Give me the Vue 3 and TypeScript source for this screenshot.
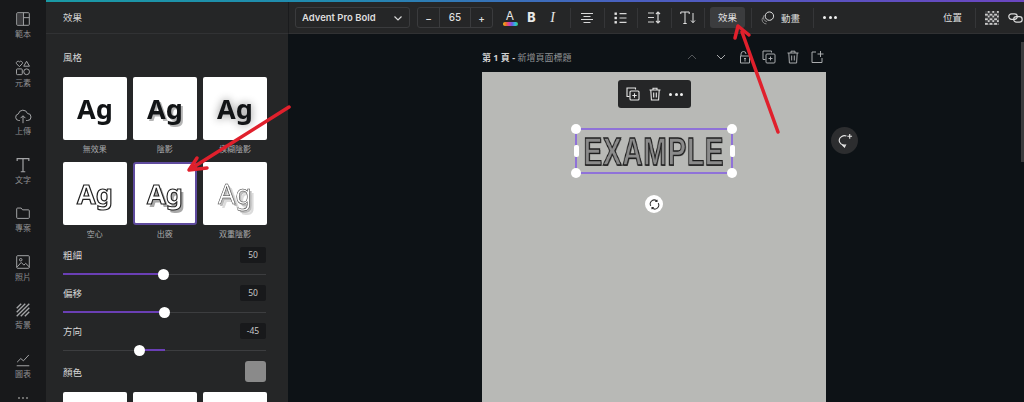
<template>
  <div class="app">
    <nav class="rail">
      <div v-for="item in railItems" :key="item.label" class="rail-item">
        <svg class="rail-icon" viewBox="0 0 20 20" fill="none" stroke="currentColor" stroke-width="1.1" v-html="item.icon"></svg>
        <span>{{ item.label }}</span>
      </div>
      <div class="rail-more"><i></i><i></i><i></i></div>
    </nav>

    <div class="main">
      <div class="strip"></div>
      <div class="body">
        <aside class="panel">
          <div class="panel-head">效果</div>
          <div class="panel-body">
            <div class="section-title">風格</div>
            <div class="tiles">
              <div v-for="tile in styleTiles" :key="tile.label" class="tile-cell">
                <div class="tile" :class="{ selected: tile.selected }">
                  <span class="ag" :class="tile.kind">Ag</span>
                </div>
                <div class="tile-label">{{ tile.label }}</div>
              </div>
            </div>

            <div v-for="s in sliders" :key="s.label" class="slider-block">
              <div class="slider-head">
                <span>{{ s.label }}</span>
                <span class="value">{{ s.value }}</span>
              </div>
              <div class="slider">
                <div class="fill" :style="{ left: s.from + 'px', width: s.to - s.from + 'px' }"></div>
                <div class="knob" :style="{ left: s.knob + 'px' }"></div>
              </div>
            </div>

            <div class="color-row">
              <span>顏色</span>
              <span class="swatch"></span>
            </div>
            <div class="tiles">
              <div v-for="n in 3" :key="n" class="tile"></div>
            </div>
          </div>
        </aside>

        <div class="work">
          <header class="topbar">
            <div class="font-select">
              <span>Advent Pro Bold</span>
              <svg width="10" height="10" viewBox="0 0 10 10" fill="none" stroke="#d8d8d8" stroke-width="1.2"><path d="M1.5 3.5 5 7l3.5-3.5" /></svg>
            </div>
            <div class="stepper">
              <span class="step">−</span>
              <span class="size">65</span>
              <span class="step">+</span>
            </div>
            <div class="tool-sm color-a">
              <span>A</span>
              <i></i>
            </div>
            <div class="tool-sm bold">B</div>
            <div class="tool-sm italic">I</div>
            <div class="tool sep">
              <svg width="14" height="12" viewBox="0 0 14 12" stroke="#d8d8d8" stroke-width="1.2"><path d="M1 1.5h12M3.5 4.5h7M1 7.5h12M3.5 10.5h7" /></svg>
            </div>
            <div class="tool sep">
              <svg width="13" height="12" viewBox="0 0 13 12" stroke="#d8d8d8" stroke-width="1.2" fill="#e4e4e4"><rect x="0.5" y="0.5" width="2.4" height="2.4" stroke="none" /><rect x="0.5" y="4.8" width="2.4" height="2.4" stroke="none" /><rect x="0.5" y="9.1" width="2.4" height="2.4" stroke="none" /><path d="M5.5 1.7h7M5.5 6h7M5.5 10.3h7" /></svg>
            </div>
            <div class="tool sep">
              <svg width="15" height="13" viewBox="0 0 15 13" fill="none" stroke="#d8d8d8" stroke-width="1.2"><path d="M1 2h6M1 6.500h6M1 11h6M11 1v11M9 3l2-2 2 2M9 10l2 2 2-2" /></svg>
            </div>
            <div class="tool sep">
              <svg width="16" height="13" viewBox="0 0 16 13" fill="none" stroke="#e4e4e4" stroke-width="1"><path d="M.8 3V1h8.400v2M5 1v11.500M3.300 12.500h3.400" /><path d="M13 2v9.500M11 9.500l2 2.200 2-2.200" /></svg>
            </div>
            <div class="tool-end sep">
              <span class="effect-btn">效果</span>
            </div>
            <div class="anim sep">
              <svg width="14" height="14" viewBox="0 0 15 15" fill="none" stroke="#c9c9c9"><circle cx="9" cy="5.500" r="4.500" stroke="#ededed" /><path d="M3.400 4.400a4.500 4.500 0 0 0 3 7M1.800 7a4.500 4.500 0 0 0 4 6.800" stroke="#8c8c8c" /></svg>
              <span>動畫</span>
            </div>
            <div class="tool sep dots-tool">
              <span class="dots"><i></i><i></i><i></i></span>
            </div>
            <div class="position">位置</div>
            <div class="checker"></div>
            <svg class="link" width="15" height="12" viewBox="0 0 15 12" fill="none" stroke="#dcdcdc" stroke-width="1.2"><rect x="0.800" y="1.800" width="8.500" height="5.500" rx="2.700" /><rect x="5.700" y="4.700" width="8.500" height="5.500" rx="2.700" /></svg>
          </header>

          <section class="canvas">
            <div class="page-col">
              <div class="page-head">
                <div class="page-title"><b>第 1 頁 -</b> <span>新增頁面標題</span></div>
                <div class="page-actions">
                  <svg v-for="a in pageActions" :key="a.name + a.icon.length" width="14" height="14" viewBox="0 0 14 14" fill="none" stroke="currentColor" stroke-width="1" :class="a.name" v-html="a.icon"></svg>
                </div>
              </div>
              <div class="page">
                <div class="float-bar">
                  <svg width="14" height="14" viewBox="0 0 14 14" fill="none" stroke="#e8e8e8" stroke-width="1.100"><path d="M9.500 2.500V1H1v8.500h2.500" /><rect x="4" y="4" width="9" height="9" rx="1" /><path d="M8.500 6.300v4.400M6.300 8.500h4.400" /></svg>
                  <svg width="14" height="14" viewBox="0 0 14 14" fill="none" stroke="#e8e8e8" stroke-width="1.100"><path d="M1.500 3h11M5 3V1.200h4V3M2.800 3l.6 10h7.200l.6-10M5.700 5.500v5M8.300 5.500v5" /></svg>
                  <span class="dots"><i></i><i></i><i></i></span>
                </div>
                <div class="selection">
                  <span class="example">EXAMPLE</span>
                  <i class="h tl"></i><i class="h tr"></i><i class="h bl"></i><i class="h br"></i>
                  <i class="bar lf"></i><i class="bar rt"></i>
                </div>
                <div class="rotate">
                  <svg width="11" height="11" viewBox="0 0 12 12" fill="none" stroke="#333" stroke-width="1.100"><path d="M2 7.500A4.200 4.200 0 0 1 8.500 2.300M10 4.500A4.200 4.200 0 0 1 3.500 9.700M8.800.8v2H6.800M3.200 11.200v-2h2" /></svg>
                </div>
              </div>
            </div>
            <div class="comment">
              <svg width="16" height="16" viewBox="0 0 17 17" fill="none" stroke="#e8e8e8" stroke-width="1.200"><path d="M10 3.200A5.700 5 0 1 0 9 12.800L8 15l-2.500-2.500" /><path d="M13.500 1v5M11 3.500h5" /></svg>
            </div>
            <div class="scroll-thumb"></div>
          </section>
        </div>
      </div>
    </div>

    <svg class="arrows" width="1024" height="402" viewBox="0 0 1024 402" fill="none" stroke="#e0202c" stroke-width="3.500" stroke-linecap="round" stroke-linejoin="round">
      <path d="M289 107 192 168" />
      <path d="M197 158 189 170 207 168" />
      <path d="M778 132 742 32" />
      <path d="M735 38 738 26 749 35" />
    </svg>
  </div>
</template>

<script setup lang="ts">
interface RailItem {
  label: string;
  icon: string;
}

const railItems: RailItem[] = [
  { label: "範本", icon: '<rect x="3" y="3" width="14" height="14" rx="1"/><path d="M10.500 3v14M10.500 8.500H17" /><rect x="3.800" y="3.800" width="6" height="12.400" fill="currentColor" opacity=".25" stroke="none"/>' },
  { label: "元素", icon: '<path d="M6 8.500 2.800 5.200a1.900 1.900 0 0 1 3.200-2 1.900 1.900 0 0 1 3.200 2zM14 2.500l3.200 5.500h-6.400z" /><rect x="2.800" y="11" width="6.400" height="6.400" rx="1"/><circle cx="14" cy="14.200" r="3.200"/>' },
  { label: "上傳", icon: '<path d="M6.500 15H5.200a3.700 3.700 0 0 1-.4-7.300A5.300 5.300 0 0 1 15 7.200 3.900 3.900 0 0 1 15 15h-1.500M10 18v-8M7.300 12.400 10 9.700l2.700 2.700" />' },
  { label: "文字", icon: '<path d="M3.500 5.500V3h13v2.500M10 3v14.500M7.500 17.500h5" stroke-width="1.300" />' },
  { label: "專案", icon: '<path d="M3 5.500a1 1 0 0 1 1-1h4l1.500 2H16a1 1 0 0 1 1 1V15a1 1 0 0 1-1 1H4a1 1 0 0 1-1-1z" />' },
  { label: "照片", icon: '<rect x="3" y="3" width="14" height="14" rx="1"/><circle cx="7.500" cy="7.500" r="1.400"/><path d="m3.500 15.500 4.500-5 3 3 2-2 4 4" />' },
  { label: "背景", icon: '<path d="M3 8 8 3M3 12.500 12.500 3M3 17 17 3M7.500 17 17 7.500M12 17l5-5" stroke-width="1.500" />' },
  { label: "圖表", icon: '<path d="M3 17.500h14M3.500 13.500l4-4 3 2.500 6-6.500" />' },
];

interface StyleTile {
  label: string;
  kind: string;
  selected?: boolean;
}

const styleTiles: StyleTile[] = [
  { label: "無效果", kind: "plain" },
  { label: "陰影", kind: "shadow" },
  { label: "模糊陰影", kind: "blur" },
  { label: "空心", kind: "hollow" },
  { label: "出竅", kind: "splice", selected: true },
  { label: "双重陰影", kind: "echo" },
];

const sliders = [
  { label: "粗細", value: "50", from: 0, to: 100, knob: 100 },
  { label: "偏移", value: "50", from: 0, to: 101, knob: 101 },
  { label: "方向", value: "-45", from: 76, to: 102, knob: 76 },
];

const pageActions = [
  { name: "dim", icon: '<path d="M3 9l4-4 4 4" />' },
  { name: "gap-a", icon: '<path d="M3 5l4 4 4-4" />' },
  { name: "gap-b", icon: '<path d="M3 6V4a2.500 2.500 0 0 1 5 0M2.500 6h9v7h-9zM6 8.500h2M7 8.500v3" />' },
  { name: "gap-b", icon: '<path d="M9.500 2.500V1H1v8.500h2.500" /><rect x="4" y="4" width="9" height="9" rx="1" /><path d="M8.500 6.500v4M6.500 8.500h4" />' },
  { name: "gap-b", icon: '<path d="M1.500 3h11M5 3V1.200h4V3M2.800 3l.6 10h7.200l.6-10M5.700 5.500v5M8.300 5.500v5" />' },
  { name: "gap-b", icon: '<path d="M6 2H2v10.500h10V8M10.500 1v6M7.500 4h6" />' },
];
</script>

<style>
html,
body {
  margin: 0;
  background: #0d1216;
  overflow: hidden;
}
</style>

<style scoped>
.app {
  position: relative;
  display: flex;
  width: 1024px;
  height: 402px;
  overflow: hidden;
  font-family: "Noto Sans", "Noto Sans CJK TC", sans-serif;
  color: #d6d6d6;
}

/* left icon rail */
.rail {
  width: 46px;
  flex: none;
  background: #18191b;
  padding-top: 10px;
  box-sizing: border-box;
  color: #8f9092;
}

.rail-item {
  height: 48.5px;
  display: flex;
  flex-direction: column;
  align-items: center;
  font-size: 8px;
  line-height: 10px;
}

.rail-icon {
  width: 18px;
  height: 18px;
  margin-bottom: 1px;
  color: #a4a5a7;
}

.rail-more {
  display: flex;
  justify-content: center;
  gap: 2px;
  margin-top: -1px;
}

.rail-more i {
  width: 2px;
  height: 2px;
  background: #888;
  border-radius: 50%;
}

.main {
  flex: 1;
  display: flex;
  flex-direction: column;
  min-width: 0;
}

.strip {
  height: 2px;
  flex: none;
  background: linear-gradient(90deg, #1a9aa5 0%, #2189b0 30%, #4a5fc0 60%, #6b46c1 100%);
}

.body {
  flex: 1;
  display: flex;
  min-height: 0;
}

/* effects panel */
.panel {
  width: 242px;
  flex: none;
  background: #252627;
  font-size: 9.500px;
}

.panel-head {
  height: 32px;
  box-sizing: border-box;
  padding: 9px 17px 0;
  line-height: 13px;
  font-size: 9.500px;
  border-bottom: 1px solid #313234;
}

.panel-body {
  padding: 17px 22px 0 17px;
}

.section-title {
  height: 14px;
  line-height: 14px;
  margin-bottom: 12px;
  font-size: 9.500px;
}

.tiles {
  display: grid;
  grid-template-columns: 63.500px 63.500px 64px;
  column-gap: 6.500px;
}

.tile-cell {
  height: 85px;
}

.tile {
  height: 63px;
  background: #fff;
  border-radius: 2px;
  display: flex;
  align-items: center;
  justify-content: center;
  box-sizing: border-box;
}

.tile.selected {
  border: 2px solid #5f4b9e;
  border-radius: 3px;
}

.tile-label {
  text-align: center;
  font-size: 8px;
  line-height: 18px;
  color: #a9aaab;
}

.ag {
  font-family: "Noto Sans", sans-serif;
  font-size: 27px;
  font-weight: 700;
  line-height: 1;
  color: #121416;
  will-change: transform;
}

.ag.shadow {
  text-shadow: 2px 2px 0 #b5b5b5;
}

.ag.blur {
  text-shadow: 0 0 9px #8a8a8a;
}

.ag.hollow {
  color: #fff;
  -webkit-text-stroke: 1.200px #222;
}

.ag.splice {
  color: #fff;
  -webkit-text-stroke: 1.100px #222;
  text-shadow: 2.500px 2.500px 0 #a8a8a8;
}

.ag.echo {
  color: #fff;
  font-weight: 400;
  -webkit-text-stroke: 0.500px #333;
  text-shadow: 2px 2px 0 #bdbdbd, 4px 4px 0 #dcdcdc;
}

.slider-block {
  height: 38px;
}

.slider-head {
  display: flex;
  justify-content: space-between;
  align-items: center;
  height: 16px;
}

.value {
  width: 26px;
  height: 16px;
  box-sizing: border-box;
  background: #18191b;
  border-radius: 2px;
  text-align: center;
  font-size: 8.500px;
  line-height: 16px;
  color: #c7c7c7;
}

.slider {
  position: relative;
  height: 22px;
}

.slider::before {
  content: "";
  position: absolute;
  left: 0;
  right: 0;
  top: 10.500px;
  height: 1px;
  background: #3c3d3f;
}

.fill {
  position: absolute;
  top: 10px;
  height: 2px;
  background: #6a3fb5;
}

.knob {
  position: absolute;
  top: 5.500px;
  width: 11px;
  height: 11px;
  margin-left: -5.500px;
  border-radius: 50%;
  background: #fff;
}

.color-row {
  display: flex;
  justify-content: space-between;
  align-items: center;
  height: 21px;
  margin-bottom: 10px;
}

.swatch {
  width: 21px;
  height: 21px;
  border-radius: 3px;
  background: #8a8a8a;
}

/* right side */
.work {
  flex: 1;
  display: flex;
  flex-direction: column;
  min-width: 0;
}

.topbar {
  height: 32px;
  flex: none;
  box-sizing: border-box;
  display: flex;
  align-items: center;
  padding-left: 7px;
  background: #252627;
  border-bottom: 1px solid #303133;
  border-left: 1px solid #1a1b1d;
  font-size: 10px;
}

.font-select {
  width: 115px;
  height: 21px;
  box-sizing: border-box;
  margin-left: -1px;
  padding: 0 6px 0 6px;
  border: 1px solid #3a3b3d;
  border-radius: 3px;
  display: flex;
  align-items: center;
  justify-content: space-between;
  font-family: Inter, sans-serif;
  font-size: 9.500px;
  font-weight: 600;
  color: #dedede;
}

.stepper {
  width: 76px;
  height: 21px;
  margin-left: 7px;
  box-sizing: border-box;
  border: 1px solid #3a3b3d;
  border-radius: 3px;
  display: flex;
  align-items: center;
  font-family: Inter, sans-serif;
  font-weight: 500;
  color: #dedede;
}

.step {
  width: 21px;
  text-align: center;
}

.size {
  flex: 1;
  text-align: center;
  line-height: 19px;
  border-left: 1px solid #3a3b3d;
  border-right: 1px solid #3a3b3d;
}

.tool-sm {
  width: 21px;
  text-align: center;
  color: #e8e8e8;
  font-family: Inter, sans-serif;
}

.color-a {
  margin-left: 6px;
  width: 22px;
  display: flex;
  flex-direction: column;
  align-items: center;
  font-size: 12px;
  line-height: 12px;
  padding-top: 1px;
}

.color-a i {
  width: 15px;
  height: 4px;
  border-radius: 2px;
  background: linear-gradient(90deg, #f0c419, #f06a2a, #d63fa5, #6a5ae0, #2fb8e0, #3ccf6a);
}

.bold {
  font-weight: 800;
  font-size: 12.500px;
}

.italic {
  font-family: "Liberation Serif", serif;
  font-style: italic;
  font-size: 14px;
  margin-right: 7px;
}

.tool {
  width: 33.500px;
  height: 20px;
  display: flex;
  align-items: center;
  justify-content: center;
  flex: none;
  box-sizing: border-box;
}

.sep {
  border-left: 1px solid #353638;
}

.tool-end {
  width: 47px;
  height: 20px;
  box-sizing: border-box;
  display: flex;
  align-items: center;
  padding-left: 5px;
}

.effect-btn {
  width: 35px;
  height: 21px;
  flex: none;
  border-radius: 3px;
  background: #3b3c3e;
  color: #e2e2e2;
  font-size: 9.500px;
  line-height: 21px;
  text-align: center;
}

.anim {
  width: 62px;
  height: 20px;
  box-sizing: border-box;
  display: flex;
  align-items: center;
  padding-left: 9px;
  gap: 6px;
  font-size: 9.500px;
  color: #dedede;
}

.dots-tool {
  border-left: 1px solid #353638;
}

.dots {
  display: inline-flex;
  gap: 2.500px;
}

.dots i {
  width: 3px;
  height: 3px;
  border-radius: 50%;
  background: #f0f0f0;
}

.position {
  margin-left: auto;
  margin-right: 9px;
  height: 20px;
  line-height: 20px;
  padding-right: 13px;
  border-right: 1px solid #353638;
  font-size: 9.500px;
  color: #dedede;
}

.checker {
  width: 14px;
  height: 14px;
  background-image: conic-gradient(#c9c9c9 25%, #3a3b3d 0 50%, #c9c9c9 0 75%, #3a3b3d 0);
  background-size: 4.600px 4.600px;
}

.link {
  margin-left: 9px;
  margin-right: 1px;
  flex: none;
}

/* canvas */
.canvas {
  position: relative;
  flex: 1;
  display: flex;
  min-height: 0;
  overflow: hidden;
  padding-left: 194px;
  background: #0d1216;
}

.page-col {
  width: 344px;
  flex: none;
}

.page-head {
  height: 38px;
  display: flex;
  align-items: center;
  justify-content: space-between;
  padding-top: 8px;
  box-sizing: border-box;
  font-size: 9px;
}

.page-title {
  color: #8f9193;
}

.page-title b {
  color: #cfd0d1;
  font-weight: 700;
}

.page-actions {
  display: flex;
  align-items: center;
  color: #a9abad;
  margin-right: 2px;
}

.page-actions .dim {
  color: #54575a;
  margin-right: 15px;
}

.page-actions .gap-a {
  margin-right: 10px;
}

.page-actions .gap-b {
  margin-right: 10px;
}

.page-actions .gap-b:last-child {
  margin-right: 0;
}

.page {
  position: relative;
  height: 340px;
  background: #b8b9b6;
}

.float-bar {
  position: absolute;
  left: 136px;
  top: 8px;
  width: 73px;
  height: 28px;
  box-sizing: border-box;
  padding: 0 8px;
  display: flex;
  align-items: center;
  justify-content: space-between;
  background: #252627;
  border-radius: 3px;
}

.selection {
  position: absolute;
  left: 93px;
  top: 56px;
  width: 158px;
  height: 46px;
  box-sizing: border-box;
  border: 2px solid #8f72d8;
  display: flex;
  align-items: center;
  justify-content: center;
}

.example {
  display: inline-block;
  font-family: "Liberation Sans", sans-serif;
  font-weight: 700;
  font-size: 39px;
  line-height: 1;
  letter-spacing: 1px;
  transform: scaleX(0.72);
  will-change: transform;
  color: #8b8b8b;
  -webkit-text-stroke: 1.300px #1d1d1d;
  text-shadow: 1px 1px 0 #555;
}

.h {
  position: absolute;
  width: 10px;
  height: 10px;
  border-radius: 50%;
  background: #fff;
}

.tl { left: -6px; top: -6px; }
.tr { right: -6px; top: -6px; }
.bl { left: -6px; bottom: -6px; }
.br { right: -6px; bottom: -6px; }

.bar {
  position: absolute;
  top: 15px;
  width: 5px;
  height: 12px;
  border-radius: 2px;
  background: #fff;
}

.lf { left: -3.500px; }
.rt { right: -3.500px; }

.rotate {
  position: absolute;
  left: 163px;
  top: 123px;
  width: 18px;
  height: 18px;
  border-radius: 50%;
  background: #fff;
  display: flex;
  align-items: center;
  justify-content: center;
}

.comment {
  position: absolute;
  left: 543px;
  top: 93px;
  width: 27px;
  height: 27px;
  border-radius: 50%;
  background: #2c2d2f;
  display: flex;
  align-items: center;
  justify-content: center;
}

.scroll-thumb {
  position: absolute;
  right: 0;
  top: 8px;
  width: 3px;
  height: 120px;
  background: #3a3b3d;
}

.arrows {
  position: absolute;
  left: 0;
  top: 0;
  pointer-events: none;
}
</style>
